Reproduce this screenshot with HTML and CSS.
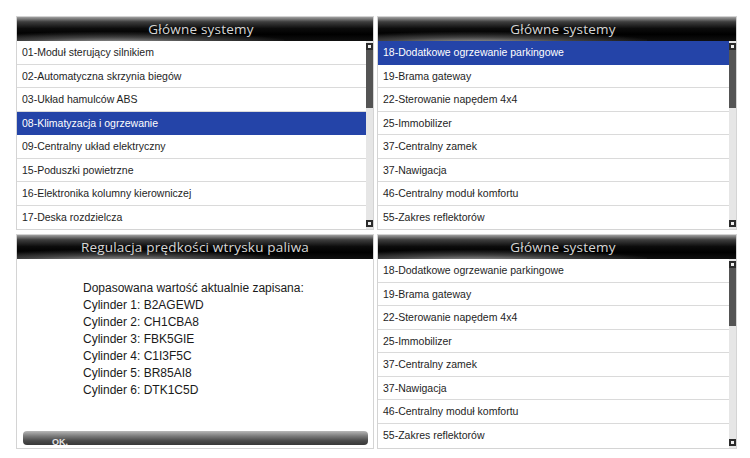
FILE: index.html
```html
<!DOCTYPE html>
<html lang="pl">
<head>
<meta charset="utf-8">
<title>Główne systemy</title>
<link rel="stylesheet" href="styles.css">
</head>
<body>
<div class="screen">
  <section class="panel">
    <header class="ph"><span>Główne systemy</span></header>
    <div class="pbody">
      <ul class="list">
        <li>01-Moduł sterujący silnikiem</li>
        <li>02-Automatyczna skrzynia biegów</li>
        <li>03-Układ hamulców ABS</li>
        <li class="active">08-Klimatyzacja i ogrzewanie</li>
        <li>09-Centralny układ elektryczny</li>
        <li>15-Poduszki powietrzne</li>
        <li>16-Elektronika kolumny kierowniczej</li>
        <li>17-Deska rozdzielcza</li>
      </ul>
      <div class="sb"><span class="btn"></span><span class="track"><span class="thumb"></span></span><span class="btn"></span></div>
    </div>
  </section>
  <section class="panel">
    <header class="ph"><span>Główne systemy</span></header>
    <div class="pbody">
      <ul class="list">
        <li class="active">18-Dodatkowe ogrzewanie parkingowe</li>
        <li>19-Brama gateway</li>
        <li>22-Sterowanie napędem 4x4</li>
        <li>25-Immobilizer</li>
        <li>37-Centralny zamek</li>
        <li>37-Nawigacja</li>
        <li>46-Centralny moduł komfortu</li>
        <li>55-Zakres reflektorów</li>
      </ul>
      <div class="sb"><span class="btn"></span><span class="track"><span class="thumb"></span></span><span class="btn"></span></div>
    </div>
  </section>
  <section class="panel">
    <header class="ph ph-center"><span>Regulacja prędkości wtrysku paliwa</span></header>
    <div class="pbody msg">
      <div class="msgtext">
        <p>Dopasowana wartość aktualnie zapisana:</p>
        <p>Cylinder 1: B2AGEWD</p>
        <p>Cylinder 2: CH1CBA8</p>
        <p>Cylinder 3: FBK5GIE</p>
        <p>Cylinder 4: C1I3F5C</p>
        <p>Cylinder 5: BR85AI8</p>
        <p>Cylinder 6: DTK1C5D</p>
      </div>
      <div class="okbar"><span>OK.</span></div>
    </div>
  </section>
  <section class="panel">
    <header class="ph"><span>Główne systemy</span></header>
    <div class="pbody">
      <ul class="list">
        <li>18-Dodatkowe ogrzewanie parkingowe</li>
        <li>19-Brama gateway</li>
        <li>22-Sterowanie napędem 4x4</li>
        <li>25-Immobilizer</li>
        <li>37-Centralny zamek</li>
        <li>37-Nawigacja</li>
        <li>46-Centralny moduł komfortu</li>
        <li>55-Zakres reflektorów</li>
      </ul>
      <div class="sb"><span class="btn"></span><span class="track"><span class="thumb"></span></span><span class="btn"></span></div>
    </div>
  </section>
</div>
</body>
</html>
```
FILE: styles.css
```css
* { box-sizing: border-box; }
body {
  margin: 0;
  background: #fff;
  font-family: "Liberation Sans", Arial, sans-serif;
}
.screen {
  display: grid;
  grid-template-columns: 358px 360px;
  grid-template-rows: 214px 215px;
  column-gap: 3px;
  row-gap: 4px;
  padding: 16px 0 0 16px;
}
.panel {
  border: 1px solid #d4d4d4;
  display: flex;
  flex-direction: column;
  background: #fff;
}
.ph {
  height: 24px;
  flex: none;
  position: relative;
  overflow: hidden;
  background: linear-gradient(to bottom, #a0a0a0 0%, #3e3e3e 20%, #0c0c0c 48%, #000 72%, #101010 100%);
  text-align: center;
  padding-left: 12px;
}
.ph::before {
  content: "";
  position: absolute;
  left: -20%;
  right: 25%;
  bottom: -3px;
  height: 18px;
  background: radial-gradient(ellipse 55% 70% at 50% 100%, rgba(200,200,200,0.85), rgba(130,130,130,0.45) 55%, rgba(0,0,0,0) 100%);
}
.ph span {
  position: relative;
  font-family: "Open Sans", "DejaVu Sans", sans-serif;
  font-size: 13.5px;
  line-height: 24px;
  color: #d6d6d6;
  letter-spacing: 0.2px;
}
.ph-center { padding-left: 0; }
.pbody {
  flex: 1;
  display: flex;
  min-height: 0;
}
.list {
  list-style: none;
  margin: 0;
  padding: 0;
  flex: 1;
}
.list li {
  height: 23.5px;
  line-height: 23.5px;
  border-bottom: 1px solid #dadada;
  padding-left: 5px;
  font-size: 10.5px;
  color: #1e1e1e;
  white-space: nowrap;
}
.list li:last-child { border-bottom: none; }
.list li.active {
  background: #2444a8;
  color: #fff;
  border-bottom-color: #2444a8;
}
.sb {
  width: 7px;
  flex: none;
  display: flex;
  flex-direction: column;
  background: #e6e6e6;
  padding: 2px 0;
}
.btn {
  width: 7px;
  height: 7px;
  flex: none;
  background: #2b2b2b;
  display: flex;
  align-items: center;
  justify-content: center;
}
.btn::after {
  content: "";
  width: 3px;
  height: 3px;
  background: #eee;
}
.track {
  flex: 1;
  display: flex;
  flex-direction: column;
}
.thumb {
  height: 58px;
  background: #545454;
}
.msg {
  flex-direction: column;
  padding: 21px 5px 3px 6px;
}
.msgtext {
  padding-left: 60px;
}
.msgtext p {
  margin: 0;
  font-size: 12px;
  line-height: 17px;
  color: #1a1a1a;
}
.okbar {
  margin-top: auto;
  height: 14px;
  border-radius: 4px;
  background: linear-gradient(to bottom, #b8b8b8 0%, #7c7c7c 35%, #4a4a4a 70%, #383838 100%);
  padding-left: 29px;
}
.okbar span {
  font-size: 9px;
  font-weight: bold;
  line-height: 14px;
  color: #e4e4e4;
}
```
